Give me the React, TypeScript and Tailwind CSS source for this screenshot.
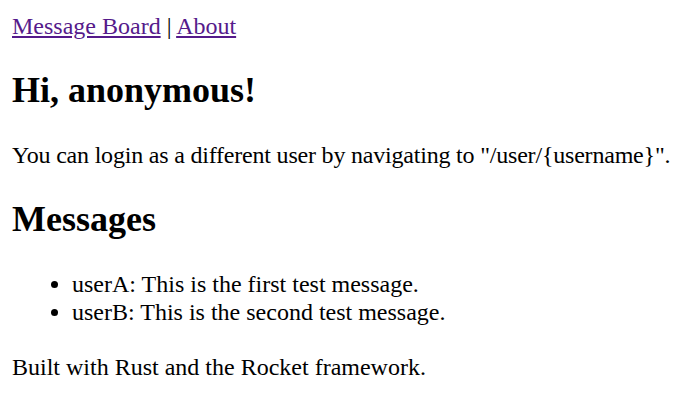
export default function App() {
  const messages = [
    { user: 'userA', text: 'This is the first test message.' },
    { user: 'userB', text: 'This is the second test message.' },
  ];

  return (
    <div className="min-h-screen bg-white p-[12px] font-['Liberation_Serif',serif] text-[24px] leading-[28px] text-black">
      <nav>
        <a href="#" className="text-[#551a8b] underline">Message Board</a>
        {' | '}
        <a href="#" className="text-[#551a8b] underline">About</a>
      </nav>

      <h1 className="mt-[30px] mb-[30px] text-[36px] leading-[41px] font-bold">Hi, anonymous!</h1>

      <p className="whitespace-nowrap tracking-[-0.2px]">
        You can login as a different user by navigating to "/user/{'{'}username{'}'}".
      </p>

      <h2 className="mt-[30px] mb-[30px] text-[36px] leading-[41px] font-bold">Messages</h2>

      <ul className="list-disc pl-[60px] mt-[1px]">
        {messages.map((m) => (
          <li key={m.user}>
            {m.user}: {m.text}
          </li>
        ))}
      </ul>

      <p className="mt-[27px]">Built with Rust and the Rocket framework.</p>
    </div>
  );
}
